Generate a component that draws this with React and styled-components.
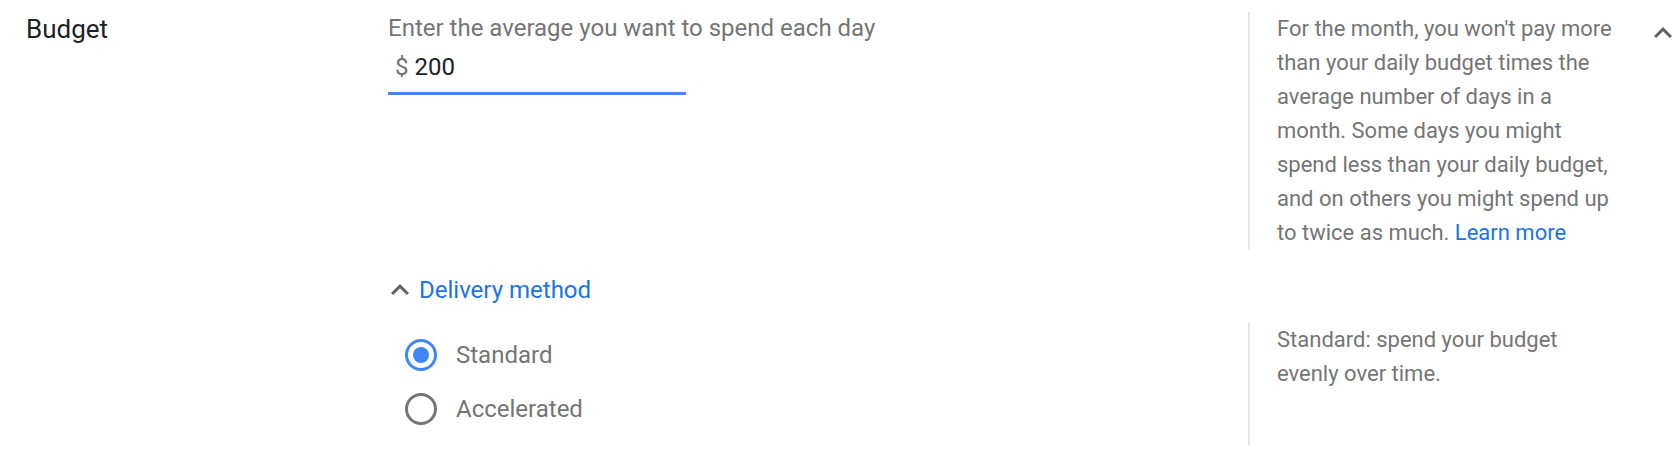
import React, { useState } from 'react';
import styled, { createGlobalStyle } from 'styled-components';

const GlobalStyle = createGlobalStyle`
    body {
        margin: 0;
        background: #ffffff;
        font-family: Roboto, "Noto Sans", "Liberation Sans", sans-serif;
    }
`;

const Page = styled.div`
    width: 1676px;
    box-sizing: border-box;
    padding: 12px 0 0 26px;
    overflow: hidden;
`;

const Row = styled.div`
    display: grid;
    grid-template-columns: 362px 860px 369px 1fr;
    margin-top: ${(p) => p.$gap || 0}px;
`;

const Label = styled.div`
    margin-top: 2px;
    font-size: 26px;
    line-height: 30px;
    color: #202124;
`;

const Main = styled.div`
    grid-column: 2;
    display: flex;
    flex-direction: column;
    align-items: flex-start;
`;

const Hint = styled.div`
    margin-top: 2px;
    font-size: 24px;
    line-height: 28px;
    color: #757575;
`;

const AmountField = styled.label`
    margin-top: 4px;
    width: 298px;
    box-sizing: border-box;
    padding: 7px 0 11px 7px;
    border-bottom: 3px solid #4285f4;
    display: flex;
    font-size: 24px;
    line-height: 28px;
`;

const Currency = styled.span`
    color: #757575;
    margin-right: 6px;
`;

const AmountInput = styled.input`
    border: none;
    outline: none;
    padding: 0;
    width: 200px;
    font-family: inherit;
    font-size: 24px;
    line-height: 28px;
    color: #202124;
    background: transparent;
`;

const Help = styled.div`
    grid-column: 3;
    border-left: 2px solid #e6e6e6;
    padding-left: 27px;
    min-height: ${(p) => p.$minHeight || 0}px;
    font-size: 22px;
    line-height: 34px;
    color: #757575;
`;

const Link = styled.a`
    color: #1a73e8;
    text-decoration: none;
`;

const ChevronCell = styled.div`
    grid-column: 4;
    display: flex;
    justify-content: flex-end;
    align-items: flex-start;
    padding: 9px 1px 0 0;
`;

const IconButton = styled.button`
    border: none;
    background: none;
    padding: 0;
    display: flex;
    cursor: pointer;
`;

const Toggle = styled.button`
    grid-column: 2;
    justify-self: start;
    display: flex;
    align-items: center;
    gap: 7px;
    border: none;
    background: none;
    padding: 0;
    font-family: inherit;
    font-size: 24px;
    line-height: 34px;
    color: #1a73e8;
    cursor: pointer;
`;

const RadioGroup = styled.div`
    grid-column: 2;
    padding-top: 5px;
    display: flex;
    flex-direction: column;
`;

const RadioOption = styled.label`
    display: flex;
    align-items: center;
    height: 54px;
    cursor: pointer;
`;

const RadioCircle = styled.span`
    position: relative;
    width: 32px;
    height: 32px;
    box-sizing: border-box;
    margin: 0 19px 0 17px;
    border-radius: 50%;
    border: 3px solid ${(p) => (p.$checked ? '#4285f4' : '#757575')};

    &::after {
        content: '';
        position: absolute;
        left: 5px;
        top: 5px;
        width: 16px;
        height: 16px;
        border-radius: 50%;
        background: #4285f4;
        display: ${(p) => (p.$checked ? 'block' : 'none')};
    }
`;

const RadioText = styled.span`
    font-size: 24px;
    line-height: 28px;
    color: #757575;
`;

function Chevron() {
    return (
        <svg width="24" height="24" viewBox="4 4 16 16" fill="#616161">
            <path d="M12 8l-6 6 1.41 1.41L12 10.83l4.59 4.58L18 14z" />
        </svg>
    );
}

export default function App() {
    const [amount, setAmount] = useState('200');
    const [method, setMethod] = useState('standard');

    const options = [
        { id: 'standard', label: 'Standard' },
        { id: 'accelerated', label: 'Accelerated' },
    ];

    return (
        <>
            <GlobalStyle />
            <Page>
                <Row>
                    <Label>Budget</Label>
                    <Main>
                        <Hint>Enter the average you want to spend each day</Hint>
                        <AmountField>
                            <Currency>$</Currency>
                            <AmountInput value={amount} onChange={(e) => setAmount(e.target.value)} />
                        </AmountField>
                    </Main>
                    <Help>
                        For the month, you won't pay more than your daily budget times the average
                        number of days in a month. Some days you might spend less than your daily
                        budget, and on others you might spend up to twice as much.{' '}
                        <Link href="#">Learn more</Link>
                    </Help>
                    <ChevronCell>
                        <IconButton aria-label="Collapse">
                            <Chevron />
                        </IconButton>
                    </ChevronCell>
                </Row>

                <Row $gap={23}>
                    <Toggle>
                        <Chevron />
                        Delivery method
                    </Toggle>
                </Row>

                <Row $gap={16}>
                    <RadioGroup>
                        {options.map((o) => (
                            <RadioOption key={o.id} onClick={() => setMethod(o.id)}>
                                <RadioCircle $checked={method === o.id} />
                                <RadioText>{o.label}</RadioText>
                            </RadioOption>
                        ))}
                    </RadioGroup>
                    <Help $minHeight={122}>Standard: spend your budget evenly over time.</Help>
                </Row>
            </Page>
        </>
    );
}
